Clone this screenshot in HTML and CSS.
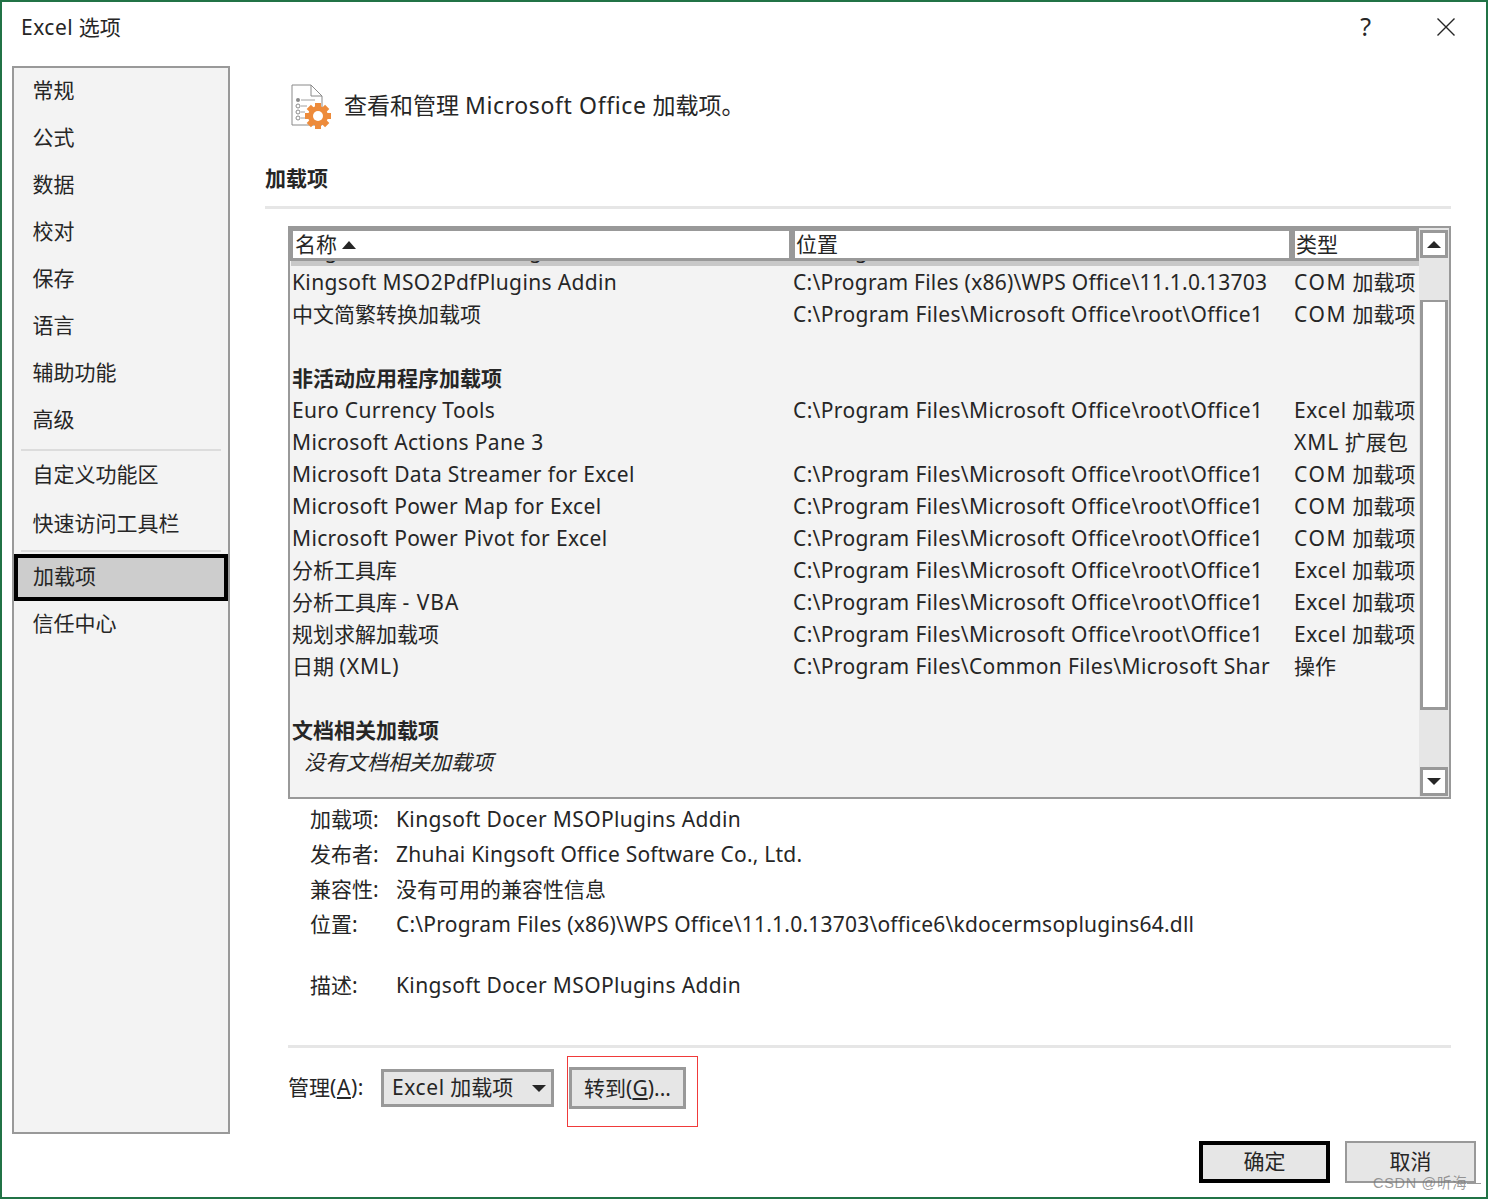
FILE: index.html
```html
<!DOCTYPE html>
<html lang="zh-CN">
<head>
  <meta charset="UTF-8">
  <title>Excel 选项</title>
  <link rel="stylesheet" href="styles.css">
</head>
<body>

<div class="window">
  <div class="titlebar">
    <span class="title"><i class="la-title">Excel</i> 选项</span>
    <span class="help">?</span>
    <svg class="close" width="20" height="20" viewBox="0 0 20 20"><path d="M1.5 1.5 18.5 18.5M18.5 1.5 1.5 18.5" stroke="#262626" stroke-width="1.4" fill="none"/></svg>
  </div>

  <div class="content">
    <div class="sidebar">
      <div class="nav-item">常规</div>
      <div class="nav-item">公式</div>
      <div class="nav-item">数据</div>
      <div class="nav-item">校对</div>
      <div class="nav-item">保存</div>
      <div class="nav-item">语言</div>
      <div class="nav-item">辅助功能</div>
      <div class="nav-item">高级</div>
      <div class="nav-sep"></div>
      <div class="nav-item nav-mid">自定义功能区</div>
      <div class="nav-item nav-tall">快速访问工具栏</div>
      <div class="nav-sep nav-sep2"></div>
      <div class="nav-item nav-active">加载项</div>
      <div class="nav-item">信任中心</div>
    </div>

    <div class="main">
      <div class="intro">
        <svg class="intro-icon" width="42" height="46" viewBox="0 0 42 46">
          <path d="M1 1H20L31 12V41H1Z" fill="#fff" stroke="#8a8a8a" stroke-width="1"/>
          <path d="M20 1V12H31" fill="none" stroke="#8a8a8a" stroke-width="1"/>
          <circle cx="7" cy="16" r="2" fill="#8a8a8a"/>
          <path d="M10 16H24" stroke="#a0a0a0"/>
          <circle cx="7" cy="22" r="2" fill="#fff" stroke="#8a8a8a"/>
          <path d="M10 22H16" stroke="#a0a0a0"/>
          <circle cx="7" cy="28" r="2" fill="#fff" stroke="#8a8a8a"/>
          <path d="M10 28H14" stroke="#a0a0a0"/>
          <circle cx="7" cy="34" r="2" fill="#fff" stroke="#8a8a8a"/>
          <path d="M10 34H14" stroke="#a0a0a0"/>
          <g fill="#ed8b3b">
            <circle cx="27" cy="32" r="10"/>
            <rect x="24" y="19" width="6" height="26"/>
            <rect x="24" y="19" width="6" height="26" transform="rotate(45 27 32)"/>
            <rect x="24" y="19" width="6" height="26" transform="rotate(90 27 32)"/>
            <rect x="24" y="19" width="6" height="26" transform="rotate(135 27 32)"/>
          </g>
          <circle cx="27" cy="32" r="5" fill="#fff"/>
        </svg>
        <span class="intro-text">查看和管理 <i class="la-intro">Microsoft Office</i> 加载项。</span>
      </div>

      <div class="section-title">加载项</div>

      <div class="panel">
        <div class="table">
          <div class="thead">
            <div class="th th-name">名称<i class="sort-up"></i></div>
            <div class="th th-loc">位置</div>
            <div class="th th-type">类型</div>
          </div>
          <div class="rows">
            <div class="row row-selected"><span>Kingsoft Docer MSOPlugins Addin</span><span class="path-wps">C:\Program Files (x86)\WPS Office\11.1.0.13703</span><span class="type"><i class="la-com">COM</i> 加载项</span></div>
            <div class="row"><span>Kingsoft MSO2PdfPlugins Addin</span><span class="path-wps">C:\Program Files (x86)\WPS Office\11.1.0.13703</span><span class="type"><i class="la-com">COM</i> 加载项</span></div>
            <div class="row"><span class="zh">中文简繁转换加载项</span><span>C:\Program Files\Microsoft Office\root\Office1</span><span class="type"><i class="la-com">COM</i> 加载项</span></div>
            <div class="row"></div>
            <div class="row row-group"><span class="zh">非活动应用程序加载项</span></div>
            <div class="row"><span>Euro Currency Tools</span><span>C:\Program Files\Microsoft Office\root\Office1</span><span class="type"><i class="la-mid">Excel</i> 加载项</span></div>
            <div class="row"><span>Microsoft Actions Pane 3</span><span></span><span class="type"><i class="la-wide">XML</i> 扩展包</span></div>
            <div class="row"><span>Microsoft Data Streamer for Excel</span><span>C:\Program Files\Microsoft Office\root\Office1</span><span class="type"><i class="la-com">COM</i> 加载项</span></div>
            <div class="row"><span>Microsoft Power Map for Excel</span><span>C:\Program Files\Microsoft Office\root\Office1</span><span class="type"><i class="la-com">COM</i> 加载项</span></div>
            <div class="row"><span>Microsoft Power Pivot for Excel</span><span>C:\Program Files\Microsoft Office\root\Office1</span><span class="type"><i class="la-com">COM</i> 加载项</span></div>
            <div class="row"><span class="zh">分析工具库</span><span>C:\Program Files\Microsoft Office\root\Office1</span><span class="type"><i class="la-mid">Excel</i> 加载项</span></div>
            <div class="row"><span class="zh">分析工具库 <i class="la-wide">- VBA</i></span><span>C:\Program Files\Microsoft Office\root\Office1</span><span class="type"><i class="la-mid">Excel</i> 加载项</span></div>
            <div class="row"><span class="zh">规划求解加载项</span><span>C:\Program Files\Microsoft Office\root\Office1</span><span class="type"><i class="la-mid">Excel</i> 加载项</span></div>
            <div class="row"><span class="zh">日期 <i class="la-wide">(XML)</i></span><span>C:\Program Files\Common Files\Microsoft Shar</span><span class="type">操作</span></div>
            <div class="row"></div>
            <div class="row row-group"><span class="zh">文档相关加载项</span></div>
            <div class="row row-empty"><span class="zh">没有文档相关加载项</span></div>
          </div>
        </div>
        <div class="scrollbar">
          <div class="sb-btn sb-up"><i class="arrow-up"></i></div>
          <div class="sb-thumb"></div>
          <div class="sb-btn sb-down"><i class="arrow-down"></i></div>
        </div>
      </div>

      <div class="details">
        <div class="detail"><span class="detail-key">加载项:</span><span class="val-name">Kingsoft Docer MSOPlugins Addin</span></div>
        <div class="detail"><span class="detail-key">发布者:</span><span class="val-text">Zhuhai Kingsoft Office Software Co., Ltd.</span></div>
        <div class="detail"><span class="detail-key">兼容性:</span><span>没有可用的兼容性信息</span></div>
        <div class="detail"><span class="detail-key">位置:</span><span class="val-text">C:\Program Files (x86)\WPS Office\11.1.0.13703\office6\kdocermsoplugins64.dll</span></div>
        <div class="detail detail-desc"><span class="detail-key">描述:</span><span class="val-name">Kingsoft Docer MSOPlugins Addin</span></div>
      </div>

      <div class="manage">
        <label class="manage-label">管理<i class="la-mid">(<u>A</u>):</i></label>
        <div class="combo"><span><i class="la-mid">Excel</i> 加载项</span><i class="arrow-down"></i></div>
        <div class="red-box"><button class="btn btn-go">转到(<u>G</u>)...</button></div>
      </div>
    </div>
  </div>

  <div class="footer">
    <button class="btn btn-ok">确定</button>
    <button class="btn btn-cancel">取消</button>
  </div>
  <div class="watermark">CSDN @听海<span class="watermark-tail"></span></div>
</div>

</body>
</html>
```

FILE: styles.css
```css
* {
  box-sizing: border-box;
}
html, body {
  margin: 0;
  padding: 0;
  background: #fff;
}
body {
  font-family: "Noto Sans", "Noto Sans CJK SC", sans-serif;
  font-size: 21px;
  color: #262626;
}
i {
  font-style: normal;
}
.la-com {
  letter-spacing: 1.6px;
}
.la-wide {
  letter-spacing: 1px;
}
.la-mid {
  letter-spacing: 0.6px;
}
.la-title {
  letter-spacing: 0.5px;
}
.window {
  position: relative;
  width: 1488px;
  height: 1199px;
  border: 2px solid #217346;
  background: #fff;
  overflow: hidden;
}

/* title bar */
.titlebar {
  display: flex;
  align-items: center;
  height: 64px;
  padding: 0 30px 16px 19px;
}
.title {
  flex: 1;
}
.help {
  font-size: 25px;
  margin-right: 65px;
}
.close {
  margin-top: 2px;
}

/* left nav */
.content {
  display: flex;
  height: 1068px;
}
.sidebar {
  flex: none;
  width: 218px;
  margin-left: 10px;
  border: 2px solid #999;
  background: #f3f3f3;
}
.nav-item {
  height: 47px;
  line-height: 45px;
  padding-left: 18.5px;
}
.nav-mid {
  height: 48px;
  line-height: 46px;
}
.nav-tall {
  height: 50px;
  line-height: 48px;
}
.nav-sep {
  height: 2px;
  margin: 5px 7px 0;
  background: #dcdcdc;
}
.nav-sep2 {
  margin-top: 1px;
  margin-bottom: 2px;
}
.nav-active {
  border: 4px solid #000;
  background: #cdcdcd;
  padding-left: 15px;
  line-height: 37px;
}

/* main column */
.main {
  flex: none;
  width: 1186px;
  margin-left: 35px;
}
.intro {
  display: flex;
  align-items: center;
  height: 78px;
  margin-left: 26px;
}
.intro-icon {
  margin: 4px 11px 0 0;
}
.intro-text {
  font-size: 23px;
  line-height: 30px;
  margin-bottom: 1px;
}
.la-intro {
  letter-spacing: 0.62px;
}
.section-title {
  margin-top: 20px;
  height: 45px;
  line-height: 29px;
  font-weight: 700;
  border-bottom: 3px solid #e6e6e6;
}

/* add-in table */
.panel {
  display: flex;
  height: 573px;
  margin: 17px 0 0 23px;
  border: 2px solid #999;
  background: #f3f3f3;
}
.table {
  width: 1129px;
  overflow: hidden;
}
.thead {
  position: relative;
  z-index: 1;
  display: flex;
  gap: 6px;
  height: 33px;
  padding: 3px;
  background: #999;
}
.th {
  background: #fff;
  height: 27px;
  line-height: 26px;
  padding-left: 2px;
  white-space: nowrap;
}
.th-name {
  width: 496px;
}
.th-loc {
  width: 494px;
  padding-left: 1px;
}
.th-type {
  width: 121px;
  padding-left: 1px;
}
.sort-up {
  display: inline-block;
  margin-left: 5px;
  vertical-align: 3px;
  border-left: 7px solid transparent;
  border-right: 7px solid transparent;
  border-bottom: 8px solid #262626;
}
.rows {
  margin-top: -27px;
}
.row {
  display: grid;
  grid-template-columns: 501px 501px 1fr;
  height: 32px;
  line-height: 32px;
  margin-left: 1px;
  padding-left: 1px;
  white-space: nowrap;
}
.row span {
  overflow: hidden;
  letter-spacing: 0.36px;
}
.row .path-wps {
  letter-spacing: 0.24px;
}
.row .zh, .row .type {
  letter-spacing: 0;
}
.row-selected {
  background: #c8c8c8;
}
.row-group {
  font-weight: 700;
}
.row-empty {
  font-style: italic;
  padding-left: 13px;
}

/* scrollbar */
.scrollbar {
  width: 30px;
  padding: 2px 1px 1px;
  display: flex;
  flex-direction: column;
  background: #e6e6e6;
}
.sb-btn {
  display: flex;
  align-items: center;
  justify-content: center;
  height: 28px;
  border: 3px solid #999;
  background: #fff;
}
.sb-down {
  margin-top: auto;
  height: 29px;
}
.sb-thumb {
  height: 410px;
  margin-top: 42px;
  border: 3px solid #999;
  border-top-width: 2px;
  background: #fff;
}
.arrow-up, .arrow-down {
  display: block;
  border-left: 7px solid transparent;
  border-right: 7px solid transparent;
}
.arrow-up {
  border-bottom: 7px solid #262626;
}
.arrow-down {
  border-top: 7px solid #262626;
}

/* details under the table */
.details {
  margin: 3px 0 0 45px;
}
.detail {
  display: flex;
  height: 35px;
  line-height: 35px;
  white-space: nowrap;
}
.detail-key {
  width: 86px;
}
.detail-desc {
  margin-top: 26px;
}
.val-name {
  letter-spacing: 0.36px;
}
.val-text {
  letter-spacing: 0.22px;
}

/* manage row */
.manage {
  display: flex;
  align-items: flex-start;
  height: 88px;
  margin: 42px 0 0 23px;
  padding-top: 8px;
  border-top: 3px solid #e6e6e6;
}
.manage-label {
  width: 93px;
  margin-top: 13px;
  line-height: 36px;
}
.combo {
  display: flex;
  align-items: center;
  justify-content: space-between;
  width: 173px;
  height: 38px;
  margin-top: 13px;
  padding: 0 5px 0 8px;
  border: 3px solid #999;
  background: #e6e6e6;
  line-height: 30px;
}
.combo span {
  margin-bottom: 2px;
}
.red-box {
  width: 131px;
  height: 71px;
  margin-left: 13px;
  padding: 10px 0 0 1px;
  border: 1px solid #f03a3a;
}
.btn {
  font: inherit;
  color: inherit;
  padding: 0 0 2px;
  background: #e6e6e6;
  border: 3px solid #999;
}
.btn-go {
  width: 117px;
  height: 42px;
}

/* footer */
.footer {
  display: flex;
  justify-content: flex-end;
  gap: 15px;
  padding: 7px 10px 0 0;
}
.btn-ok, .btn-cancel {
  width: 131px;
  height: 42px;
  padding-bottom: 4px;
}
.btn-ok {
  border: 4px solid #000;
}
.btn-cancel {
  border-width: 2px;
}
.watermark {
  position: absolute;
  left: 1371px;
  bottom: 6px;
  display: flex;
  align-items: center;
  font-family: "Liberation Sans", "Noto Sans CJK SC", sans-serif;
  font-size: 14.5px;
  line-height: 16px;
  letter-spacing: 0.7px;
  white-space: nowrap;
  color: rgba(120, 120, 120, 0.75);
}
.watermark-tail {
  width: 14px;
  height: 1px;
  background: rgba(120, 120, 120, 0.75);
}
```
